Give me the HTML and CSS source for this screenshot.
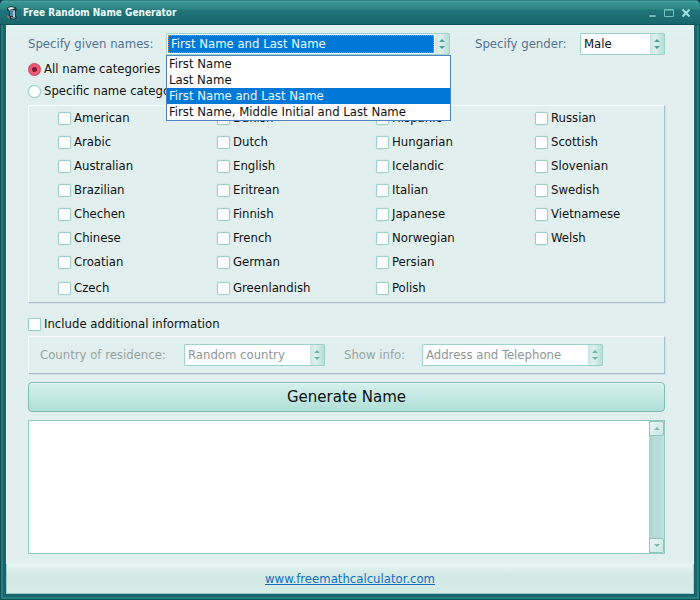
FILE: index.html
```html
<!DOCTYPE html>
<html lang="en">
<head>
<meta charset="utf-8">
<title>Free Random Name Generator</title>
<link rel="stylesheet" href="styles.css">
</head>
<body>
<div class="window">
  <header class="titlebar">
    <svg class="app-icon" width="14" height="14" viewBox="0 0 14 14" aria-hidden="true">
      <path d="M1 2l3-2 6 1 1 3-1 1v5l1 2-3 2-6-2-1-2 2-1V5L1 5z" fill="#1c3440"/>
      <path d="M2 2l3-1 4 1-2 1-4 1z" fill="#dfe9e8"/>
      <path d="M3 4h6v1H3z" fill="#6f8d9c"/>
      <path d="M4 5h3v5H4z" fill="#5485a8"/>
      <path d="M7 5h2v6H7z" fill="#b3c4c4"/>
      <path d="M1 9l2 1 1 2-1 1-2-2z" fill="#8d7a66"/>
      <path d="M5 11h5l-2 2-3-1z" fill="#6d8ba0"/>
    </svg>
    <h1 class="title">Free Random Name Generator</h1>
    <div class="window-buttons">
      <button type="button" class="window-button" aria-label="Minimize"><svg width="12" height="12" viewBox="0 0 12 12"><path d="M3 8h7v2H3z" fill="#9fe0d8" stroke="#0d4b4f" stroke-width=".5"/></svg></button>
      <button type="button" class="window-button" aria-label="Maximize"><svg width="12" height="12" viewBox="0 0 12 12"><path d="M1.500 2.500h9v7h-9z" fill="none" stroke="#79bfb9"/><path d="M1 3h10" stroke="#79bfb9"/></svg></button>
      <button type="button" class="window-button" aria-label="Close"><svg width="12" height="12" viewBox="0 0 12 12"><path d="M2.500 2.500l7 7M9.500 2.500l-7 7" stroke="#a5e2da" stroke-width="2"/></svg></button>
    </div>
  </header>
  <main class="content">
    <div class="top-row">
      <label class="caption name-caption" for="names">Specify given names:</label>
      <div class="combo names-combo active">
        <select id="names"><option>First Name</option><option>Last Name</option><option selected>First Name and Last Name</option><option>First Name, Middle Initial and Last Name</option></select>
        <svg class="arrows" width="14" height="20" viewBox="0 0 14 20" aria-hidden="true"><path d="M4 8l3-3 3 3zM4 12l3 3 3-3z"/></svg>
        <ul class="menu" role="listbox" aria-label="Given names">
          <li role="option">First Name</li>
          <li role="option">Last Name</li>
          <li role="option" class="selected" aria-selected="true">First Name and Last Name</li>
          <li role="option">First Name, Middle Initial and Last Name</li>
        </ul>
      </div>
      <label class="caption gender-caption" for="gender">Specify gender:</label>
      <div class="combo gender-combo">
        <select id="gender"><option>Male</option><option>Female</option></select>
        <svg class="arrows" width="14" height="20" viewBox="0 0 14 20" aria-hidden="true"><path d="M4 8l3-3 3 3zM4 12l3 3 3-3z"/></svg>
      </div>
    </div>
    <div class="scope">
      <label class="choice"><input type="radio" name="scope" checked>All name categories</label>
      <label class="choice"><input type="radio" name="scope">Specific name categories</label>
    </div>
    <div class="panel categories">
      <label class="choice"><input type="checkbox">American</label>
      <label class="choice"><input type="checkbox">Arabic</label>
      <label class="choice"><input type="checkbox">Australian</label>
      <label class="choice"><input type="checkbox">Brazilian</label>
      <label class="choice"><input type="checkbox">Chechen</label>
      <label class="choice"><input type="checkbox">Chinese</label>
      <label class="choice"><input type="checkbox">Croatian</label>
      <label class="choice"><input type="checkbox">Czech</label>
      <label class="choice"><input type="checkbox">Danish</label>
      <label class="choice"><input type="checkbox">Dutch</label>
      <label class="choice"><input type="checkbox">English</label>
      <label class="choice"><input type="checkbox">Eritrean</label>
      <label class="choice"><input type="checkbox">Finnish</label>
      <label class="choice"><input type="checkbox">French</label>
      <label class="choice"><input type="checkbox">German</label>
      <label class="choice"><input type="checkbox">Greenlandish</label>
      <label class="choice"><input type="checkbox">Hispanic</label>
      <label class="choice"><input type="checkbox">Hungarian</label>
      <label class="choice"><input type="checkbox">Icelandic</label>
      <label class="choice"><input type="checkbox">Italian</label>
      <label class="choice"><input type="checkbox">Japanese</label>
      <label class="choice"><input type="checkbox">Norwegian</label>
      <label class="choice"><input type="checkbox">Persian</label>
      <label class="choice"><input type="checkbox">Polish</label>
      <label class="choice"><input type="checkbox">Russian</label>
      <label class="choice"><input type="checkbox">Scottish</label>
      <label class="choice"><input type="checkbox">Slovenian</label>
      <label class="choice"><input type="checkbox">Swedish</label>
      <label class="choice"><input type="checkbox">Vietnamese</label>
      <label class="choice"><input type="checkbox">Welsh</label>
    </div>
    <label class="choice include"><input type="checkbox">Include additional information</label>
    <div class="panel extra">
      <label class="caption country-caption" for="country">Country of residence:</label>
      <div class="combo country-combo">
        <select id="country" disabled><option>Random country</option></select>
        <svg class="arrows" width="14" height="20" viewBox="0 0 14 20" aria-hidden="true"><path d="M4 8l3-3 3 3zM4 12l3 3 3-3z"/></svg>
      </div>
      <label class="caption info-caption" for="info">Show info:</label>
      <div class="combo info-combo">
        <select id="info" disabled><option>Address and Telephone</option></select>
        <svg class="arrows" width="14" height="20" viewBox="0 0 14 20" aria-hidden="true"><path d="M4 8l3-3 3 3zM4 12l3 3 3-3z"/></svg>
      </div>
    </div>
    <button type="button" class="generate">Generate Name</button>
    <div class="output">
      <textarea aria-label="Generated name" readonly></textarea>
      <div class="scrollbar">
        <button type="button" aria-label="Scroll up"><svg width="8" height="6" viewBox="0 0 8 6"><path d="M1 4l3-3 3 3z" fill="#79b9b0"/></svg></button>
        <button type="button" aria-label="Scroll down"><svg width="8" height="6" viewBox="0 0 8 6"><path d="M1 1l3 3 3-3z" fill="#79b9b0"/></svg></button>
      </div>
    </div>
  </main>
  <footer class="footer"><a href="#">www.freemathcalculator.com</a></footer>
</div>
</body>
</html>
```
FILE: styles.css
```css
* { box-sizing: border-box; }

body {
  margin: 0;
  background: #0a3340;
  font-family: "DejaVu Sans Condensed", "DejaVu Sans", sans-serif;
  font-size: 13px;
  line-height: 16px;
  color: #111;
}

button, select, textarea { font: inherit; color: inherit; }

.window {
  display: flex;
  flex-direction: column;
  min-height: 100vh;
  padding: 0 6px 6px;
  border-radius: 5px 5px 0 0;
  background: #17666b;
  box-shadow: inset 1px 0 #0e5054, inset -1px -1px #0e5054, inset 3px 0 #237f80, inset -3px -3px #237f80;
}

.titlebar {
  display: flex;
  align-items: center;
  height: 25px;
  margin: 0 -6px;
  padding: 1px 8px 0 6px;
  border-radius: 5px 5px 0 0;
  border-bottom: 1px solid #0d555a;
  background: linear-gradient(#145e60 0, #4da49f 1px, #369490 3px, #2c8583 9px, #20757a 10px, #19666b 100%);
}

.title {
  flex: 1;
  margin: 0 0 0 3px;
  font-size: 10px;
  line-height: 16px;
  color: #eefcf9;
}

.window-buttons { display: flex; gap: 5px; }

.window-button {
  display: block;
  width: 12px;
  height: 12px;
  padding: 0;
  border: 0;
  background: none;
}

.window-button svg { display: block; }

.content {
  flex: 1;
  display: flex;
  flex-direction: column;
  padding: 8px 28px 10px 21px;
  border-left: 1px solid #f5fcfb;
  border-right: 1px solid #f5fcfb;
  background: linear-gradient(#e1f3f3, #e1efee 16px);
}

.top-row, .extra { display: flex; align-items: center; }

.caption { color: #537394; }
.name-caption { width: 138px; }
.gender-caption { width: 105px; margin-left: 25px; }

.combo {
  position: relative;
  height: 22px;
  border: 1px solid #9dd3ca;
  border-radius: 1px;
  background: #fff;
}

.combo select {
  display: block;
  width: 100%;
  height: 20px;
  padding: 0 17px 0 3px;
  border: 0;
  appearance: none;
  background: transparent;
  outline: 0;
}

.arrows {
  position: absolute;
  top: 0;
  right: 0;
  background: linear-gradient(90deg, #c9e6e2, #def1ee 40%, #b7ddd7);
  fill: #4b9f99;
  pointer-events: none;
}

.names-combo { flex: 1; }
.gender-combo { width: 85px; }

.active { padding: 1px; }

.active select {
  width: calc(100% - 14px);
  height: 18px;
  padding: 0 2px;
  border: 1px dotted #d88a38;
  background: #0078d7;
  color: #e9f8ff;
}

.menu {
  position: absolute;
  z-index: 1;
  top: 21px;
  left: -1px;
  right: -2px;
  margin: 0;
  padding: 0;
  list-style: none;
  border: 1px solid #4c83c0;
  background: #fff;
}

.menu li { padding: 0 2px; white-space: nowrap; }
.menu .selected { background: #0078d7; color: #e9f8ff; }

.scope { display: grid; grid-auto-rows: 22px; margin: 3px 0; }

.choice { display: flex; align-items: center; gap: 3px; }

.choice input {
  flex: none;
  width: 13px;
  height: 13px;
  margin: 0;
  border: 1px solid #9ad0c7;
  border-radius: 2px;
  appearance: none;
  background: #fff;
  box-shadow: 0 0 1px #9ad0c7;
}

.choice input[type="radio"] { border-radius: 50%; }

.choice input[type="radio"]:checked {
  border-color: #d5425f;
  background: radial-gradient(circle, #7c1a2f 0 2px, #ee5a7a 3px 5px, #d5425f 6px);
}

.panel {
  border: 1px solid;
  border-color: #f7fdfc #a6bed0 #a6bed0 #f7fdfc;
  box-shadow: 1px 1px #d3e2e6;
}

.categories {
  display: grid;
  grid-template-rows: repeat(7, 24px) 28px;
  grid-template-columns: repeat(3, 159fr) 129fr;
  grid-auto-flow: column;
  padding-left: 29px;
}

.include { height: 24px; margin: 9px 0 0; }

.extra { height: 38px; padding-left: 11px; color: #8d9696; }
.extra .caption { color: #98a3a2; }
.extra .arrows { fill: #6cb5aa; }
.extra select { color: #8d9696; opacity: 1; }

.country-caption { width: 144px; }
.country-combo { width: 141px; }
.info-caption { width: 78px; margin-left: 19px; }
.info-combo { width: 181px; }

.generate {
  height: 30px;
  margin-top: 8px;
  padding: 0;
  border: 1px solid #82bdb3;
  border-radius: 4px;
  background: linear-gradient(#d5f0ec, #c3e8e2 50%, #afdfd7);
  box-shadow: inset 0 1px #e5f7f4;
  font-family: "DejaVu Sans", sans-serif;
  font-size: 15px;
  line-height: 20px;
  color: #0b1111;
}

.output {
  flex: 1;
  display: flex;
  margin-top: 8px;
  border: 1px solid #93c8c0;
  background: #fff;
}

.output textarea {
  flex: 1;
  min-width: 0;
  height: auto;
  padding: 3px;
  border: 0;
  resize: none;
  outline: 0;
}

.scrollbar {
  display: flex;
  flex-direction: column;
  justify-content: space-between;
  width: 15px;
  background: linear-gradient(90deg, #a4cfca, #b8dcd8 30%, #b8dcd8 75%, #c6e5e1);
}

.scrollbar button {
  display: grid;
  place-items: center;
  width: 15px;
  height: 15px;
  padding: 0;
  border: 1px solid #8fc6be;
  border-radius: 2px;
  background: linear-gradient(135deg, #eaf6f4, #cce7e3);
}

.footer {
  display: grid;
  place-items: center;
  height: 30px;
  border: 1px solid #a9ccc9;
  border-top: 0;
  background: linear-gradient(#e6f5f2, #d3e9e6 40%, #d7ebe8);
}

.footer a { color: #0f6fc0; }
```
